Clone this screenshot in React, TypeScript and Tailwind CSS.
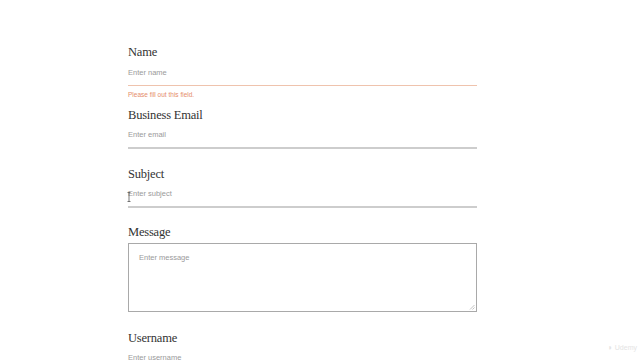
const serif = { fontFamily: '"Liberation Serif", "DejaVu Serif", serif' };
const sans = { fontFamily: '"Liberation Sans", Arial, sans-serif' };

function Label({ children }: { children: string }) {
  return (
    <div className="h-4 leading-4 text-[12.5px] text-[#333] tracking-[-0.2px]" style={serif}>
      {children}
    </div>
  );
}

function LineInput({ placeholder, error }: { placeholder: string; error?: boolean }) {
  return (
    <div
      className={`h-[26px] flex items-center text-[7.5px] text-[#9a9a9a] ${
        error ? "border-b border-[#efc3ad]" : "border-b-2 border-[#cdcdcd]"
      }`}
      style={sans}
    >
      {placeholder}
    </div>
  );
}

export default function App() {
  return (
    <div className="w-[640px] h-[360px] bg-white overflow-hidden relative">
      <div className="ml-[128px] w-[349px] pt-[44px] flex flex-col">
        <Label>Name</Label>
        <LineInput placeholder="Enter name" error />
        <div className="mt-[4px] h-[10px] leading-[10px] text-[6.5px] text-[#e58c6a]" style={sans}>
          Please fill out this field.
        </div>

        <div className="mt-[7px]">
          <Label>Business Email</Label>
          <LineInput placeholder="Enter email" />
        </div>

        <div className="mt-[17px] relative">
          <Label>Subject</Label>
          <LineInput placeholder="Enter subject" />
          {/* mouse I-beam cursor */}
          <svg className="absolute left-[-1px] top-[26px]" width="4" height="10" viewBox="0 0 4 10">
            <path d="M0.5 0.5h3M2 0.5v9M0.5 9.5h3" stroke="#555" strokeWidth="0.8" fill="none" />
          </svg>
        </div>

        <div className="mt-[16px]">
          <Label>Message</Label>
          <div
            className="mt-[3px] h-[69px] border border-[#a9a9a9] px-[10px] pt-[8px] text-[7.5px] text-[#9a9a9a] relative"
            style={sans}
          >
            Enter message
            <svg className="absolute right-[1px] bottom-[1px]" width="6" height="6" viewBox="0 0 6 6">
              <path d="M5.5 1L1 5.5M5.5 3.5L3.5 5.5" stroke="#aaa" strokeWidth="0.7" />
            </svg>
          </div>
        </div>

        <div className="mt-[18px]">
          <Label>Username</Label>
          <LineInput placeholder="Enter username" />
        </div>
      </div>

      <div
        className="absolute right-[3px] bottom-[6px] flex items-center gap-[2px] text-[7px] text-[#e4e4e4]"
        style={sans}
      >
        <span className="text-[8px]">◗</span>
        <span>Udemy</span>
      </div>
    </div>
  );
}
